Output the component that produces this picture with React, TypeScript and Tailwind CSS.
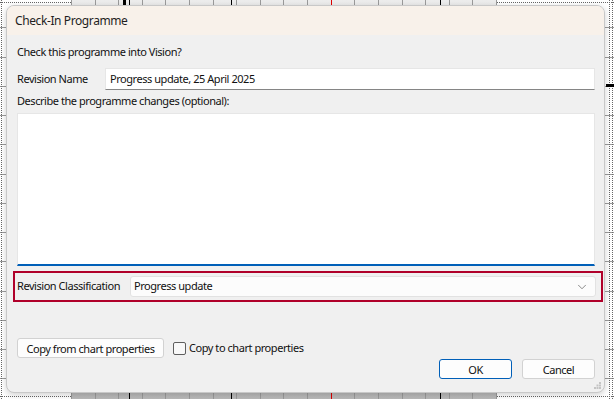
import { ChevronDown } from 'lucide-react';

const columns = Array.from({ length: 18 }, (_, i) => i);
const rows = Array.from({ length: 14 }, (_, i) => i);

function ChartBackdrop() {
  return (
    <div className="absolute inset-0 bg-white">
      {/* row grid */}
      <div className="-mt-[1px] flex flex-col">
        {rows.map((r) => (
          <div key={r} className="h-[29.25px] border-b border-[#9c9c9c]" />
        ))}
      </div>
      {/* timeline band */}
      <div className="absolute top-0 bottom-0 left-[71px] flex w-[426px] bg-linear-to-b from-[#ececec] to-[#b9b9b9]">
        {columns.map((c) => (
          <div
            key={c}
            className={`flex-1 border-l ${c === 11 ? 'border-[#e00000]' : 'border-[#9a9a9a]'}`}
          />
        ))}
        <div className="border-l border-[#9a9a9a]" />
      </div>
      {/* dotted guides */}
      <div className="absolute top-[2px] left-0 w-[71px] border-t border-dotted border-[#666]" />
      <div className="absolute top-[2px] right-0 left-[497px] border-t border-dotted border-[#666]" />
      <div className="absolute bottom-[2px] left-0 w-[71px] border-t border-dotted border-[#666]" />
      <div className="absolute right-0 bottom-[2px] left-[497px] border-t border-dotted border-[#666]" />
      <div className="absolute top-0 bottom-0 left-[1px] border-l border-dotted border-[#666]" />
      <div className="absolute top-0 bottom-0 left-[609px] border-l border-dotted border-[#666]" />
      <div className="absolute top-0 bottom-0 left-[612px] border-l border-dotted border-[#666]" />
      {/* task markers */}
      <div className="absolute top-0 left-[123px] h-[5px] w-[3px] bg-black" />
      <div className="absolute top-0 left-[129px] h-[5px] w-px bg-black" />
      <div className="absolute top-0 left-[231px] h-[5px] w-px bg-black" />
      <div className="absolute top-0 left-[440px] h-[5px] w-px bg-black" />
      <div className="absolute bottom-0 left-[129px] h-[6px] w-px bg-black" />
      <div className="absolute bottom-0 left-[231px] h-[6px] w-px bg-black" />
      <div className="absolute bottom-0 left-[440px] h-[6px] w-px bg-black" />
      <div className="absolute top-[84px] left-[606px] h-[3px] w-[8px] bg-black" />
    </div>
  );
}

function ResizeGrip() {
  return (
    <svg width="7" height="7" viewBox="0 0 7 7" className="absolute right-[3px] bottom-[3px]">
      <rect x="5" y="0" width="2" height="2" fill="#c4c4c4" />
      <rect x="2.5" y="2.5" width="2" height="2" fill="#c4c4c4" />
      <rect x="5" y="2.5" width="2" height="2" fill="#c4c4c4" />
      <rect x="0" y="5" width="2" height="2" fill="#c4c4c4" />
      <rect x="2.5" y="5" width="2" height="2" fill="#c4c4c4" />
      <rect x="5" y="5" width="2" height="2" fill="#c4c4c4" />
    </svg>
  );
}

export default function App() {
  return (
    <div className="relative h-[399px] w-[614px] overflow-hidden font-['Noto_Sans',sans-serif] text-[11px] tracking-[-0.45px] whitespace-nowrap text-[#111]">
      <ChartBackdrop />

      <div className="absolute top-[5px] left-[6px] flex h-[388px] w-[599px] flex-col overflow-hidden rounded-[8px] border border-[#c8c8c8] bg-[#f0f0f0] shadow-[0_2px_6px_rgba(0,0,0,0.18)]">
        <div className="flex h-[29px] shrink-0 items-center bg-[#f8f1ea] pl-[8px] text-[12px] tracking-[-0.4px] text-[#1f1f1f]">
          Check-In Programme
        </div>

        <div className="flex flex-1 flex-col pr-[9px] pl-[10px]">
          <p className="mt-[9px] h-[16px] leading-[16px]">Check this programme into Vision?</p>

          <div className="mt-[8px] flex h-[22px] items-center">
            <span className="w-[88px]">Revision Name</span>
            <div className="flex h-full flex-1 items-center border border-[#e6e6e6] border-b-[#858585] bg-white pl-[4px]">
              Progress update, 25 April 2025
            </div>
          </div>

          <p className="mt-[3px] h-[16px] leading-[16px]">Describe the programme changes (optional):</p>

          <div className="mt-[4px] h-[153px] border border-b-2 border-[#e6e6e6] border-b-[#005fb8] bg-white" />

          <div className="mt-[5px] -mr-[8px] -ml-[4px] flex h-[31px] items-center border-2 border-[#b0002a] pr-[5px] pl-[2px]">
            <span className="w-[113px]">Revision Classification</span>
            <div className="flex h-[21px] flex-1 items-center justify-between rounded-[3px] border border-[#e2e2e2] bg-[#fcfcfc] pr-[6px] pl-[3px]">
              <span>Progress update</span>
              <ChevronDown size={14} strokeWidth={1.2} className="text-[#5a5a5a]" />
            </div>
          </div>

          <div className="flex items-start justify-between">
            <div className="mt-[36px] flex items-center">
              <button className="h-[20px] w-[147px] rounded-[3px] border border-[#d2d2d2] bg-[#fdfdfd] leading-none">
                Copy from chart properties
              </button>
              <label className="ml-[9px] flex items-center gap-[3px]">
                <span className="h-[13px] w-[13px] rounded-[2px] border border-[#5e5e5e] bg-[#f8f8f8]" />
                <span>Copy to chart properties</span>
              </label>
            </div>
            <div className="mt-[57px] flex gap-[10px]">
              <button className="h-[20px] w-[73px] rounded-[3px] border border-[#005fb8] bg-[#fdfdfd] leading-none">
                OK
              </button>
              <button className="h-[20px] w-[73px] rounded-[3px] border border-[#d2d2d2] bg-[#fdfdfd] leading-none">
                Cancel
              </button>
            </div>
          </div>
        </div>

        <ResizeGrip />
      </div>
    </div>
  );
}
